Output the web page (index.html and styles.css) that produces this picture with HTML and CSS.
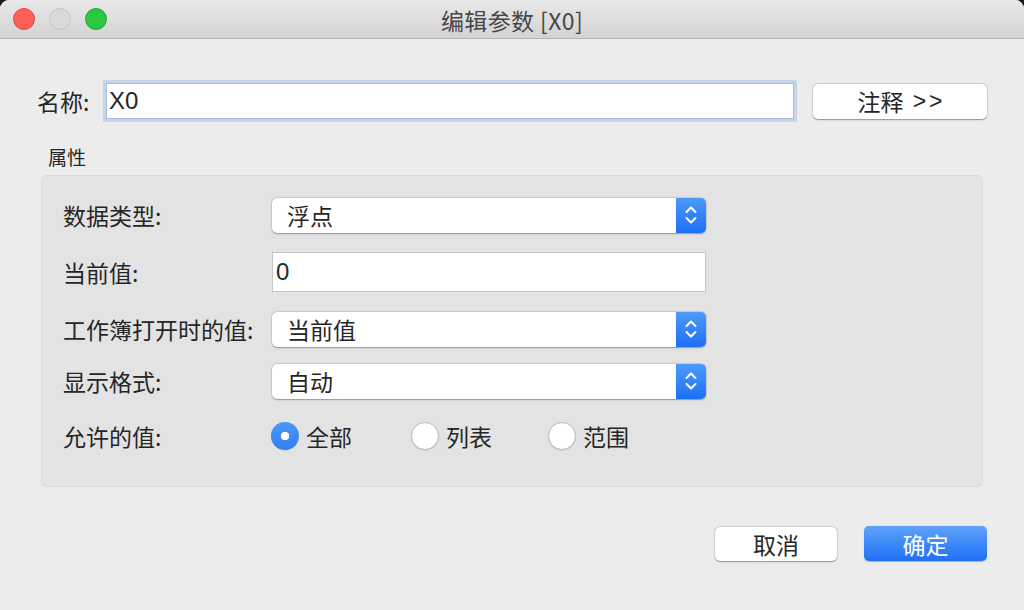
FILE: index.html
```html
<!DOCTYPE html>
<html lang="zh">
<head>
<meta charset="utf-8">
<title>编辑参数 [X0]</title>
<link rel="stylesheet" href="styles.css">
</head>
<body>
<div class="window">
  <div class="titlebar">
    <div class="lights">
      <span class="light red"></span>
      <span class="light grey"></span>
      <span class="light green"></span>
    </div>
    <div class="title">编辑参数 [X0]</div>
  </div>
  <div class="content">
    <div class="name-row">
      <span class="name-label">名称:</span>
      <div class="name-input">X0</div>
      <div class="btn note-btn">注释 <span class="arrows">&gt;&gt;</span></div>
    </div>
    <div class="section-title">属性</div>
    <div class="group">
      <div class="row row-1">
        <span class="label">数据类型:</span>
        <div class="popup"><span class="popup-text">浮点</span><span class="stepper"><svg width="14" height="22" viewBox="0 0 14 22"><path d="M2.5 8 L7 3.5 L11.5 8 M2.5 14 L7 18.5 L11.5 14" fill="none" stroke="#fff" stroke-width="2" stroke-linecap="round" stroke-linejoin="round"/></svg></span></div>
      </div>
      <div class="row row-2">
        <span class="label">当前值:</span>
        <div class="textfield">0</div>
      </div>
      <div class="row row-3">
        <span class="label">工作簿打开时的值:</span>
        <div class="popup"><span class="popup-text">当前值</span><span class="stepper"><svg width="14" height="22" viewBox="0 0 14 22"><path d="M2.5 8 L7 3.5 L11.5 8 M2.5 14 L7 18.5 L11.5 14" fill="none" stroke="#fff" stroke-width="2" stroke-linecap="round" stroke-linejoin="round"/></svg></span></div>
      </div>
      <div class="row row-4">
        <span class="label">显示格式:</span>
        <div class="popup"><span class="popup-text">自动</span><span class="stepper"><svg width="14" height="22" viewBox="0 0 14 22"><path d="M2.5 8 L7 3.5 L11.5 8 M2.5 14 L7 18.5 L11.5 14" fill="none" stroke="#fff" stroke-width="2" stroke-linecap="round" stroke-linejoin="round"/></svg></span></div>
      </div>
      <div class="row row-5">
        <span class="label">允许的值:</span>
        <div class="radios">
          <span class="radio-item r-all"><span class="radio on"></span>全部</span>
          <span class="radio-item r-list"><span class="radio"></span>列表</span>
          <span class="radio-item r-range"><span class="radio"></span>范围</span>
        </div>
      </div>
    </div>
    <div class="footer">
      <div class="btn cancel-btn">取消</div>
      <div class="btn ok-btn">确定</div>
    </div>
  </div>
</div>
</body>
</html>
```
FILE: styles.css
```css
html, body {
  margin: 0;
  padding: 0;
  background: #1a1a1a;
}
body {
  width: 1024px;
  height: 610px;
  overflow: hidden;
  font-family: "Liberation Sans", "Noto Sans CJK SC", sans-serif;
  color: #262626;
}
.window {
  width: 1024px;
  height: 610px;
  background: #ececec;
  border-radius: 9px 9px 0 0;
  overflow: hidden;
  display: flex;
  flex-direction: column;
}
.titlebar {
  height: 38px;
  flex: none;
  background: linear-gradient(#e9e9e9, #d3d3d3);
  border-bottom: 1px solid #b4b4b4;
  position: relative;
  display: flex;
  align-items: center;
  justify-content: center;
}
.lights {
  position: absolute;
  left: 13px;
  top: 8px;
  display: flex;
  gap: 14px;
}
.light {
  width: 22px;
  height: 22px;
  border-radius: 50%;
  box-sizing: border-box;
}
.red { background: #fe5f57; border: 1px solid #e2463f; }
.grey { background: #d9d9d9; border: 1px solid #c4c4c4; }
.green { background: #29c840; border: 1px solid #1faa30; }
.title {
  font-size: 23px;
  color: #474747;
  font-family: "Noto Sans CJK SC", sans-serif;
  margin-top: 1px;
  letter-spacing: 0.4px;
}
.content {
  flex: 1;
  display: flex;
  flex-direction: column;
  padding: 0 37px 0 41px;
}
.name-row {
  display: flex;
  align-items: center;
  margin-top: 43px;
  height: 38px;
  margin-left: -4px;
}
.name-label {
  font-size: 23px;
  width: 66px;
  font-family: "Noto Sans CJK SC", sans-serif;
}
.name-input {
  width: 688px;
  height: 36px;
  margin: 0 3px;
  box-sizing: border-box;
  background: #fff;
  border: 1px solid #a9bcd9;
  box-shadow: 0 0 0 3px #c6d5ea;
  font-size: 24px;
  line-height: 34px;
  padding-left: 2px;
}
.btn {
  box-sizing: border-box;
  background: #fff;
  border-radius: 5px;
  box-shadow: 0 0.5px 1.5px rgba(0,0,0,0.35), 0 0 0 0.5px rgba(0,0,0,0.12);
  display: flex;
  align-items: center;
  justify-content: center;
  font-size: 23px;
  font-family: "Noto Sans CJK SC", sans-serif;
  color: #262626;
}
.note-btn {
  width: 174px;
  height: 35px;
  margin-left: 16px;
  white-space: pre;
}
.arrows {
  font-family: "Liberation Sans", sans-serif;
  letter-spacing: 3px;
  margin-right: -3px;
  margin-left: 4px;
}
.section-title {
  font-size: 19px;
  font-family: "Noto Sans CJK SC", sans-serif;
  margin: 24px 0 0 7px;
  line-height: 26px;
}
.group {
  margin-top: 5px;
  width: 942px;
  height: 312px;
  box-sizing: border-box;
  background: #e3e3e3;
  border: 1px solid #dadada;
  border-radius: 6px;
  padding: 21px 0 0 21px;
  display: flex;
  flex-direction: column;
}
.row {
  display: flex;
  align-items: center;
}
.label {
  width: 209px;
  font-size: 23px;
  font-family: "Noto Sans CJK SC", sans-serif;
}
.row-1 { height: 36px; }
.row-2 { height: 40px; margin-top: 19px; }
.row-3 { height: 36px; margin-top: 19px; }
.row-4 { height: 36px; margin-top: 16px; }
.row-5 { height: 28px; margin-top: 23px; }
.popup {
  width: 434px;
  height: 35px;
  display: flex;
  border-radius: 5px;
  background: #fff;
  box-shadow: 0 0.5px 1.5px rgba(0,0,0,0.3), 0 0 0 0.5px rgba(0,0,0,0.12);
  overflow: hidden;
}
.popup-text {
  flex: 1;
  font-size: 23px;
  font-family: "Noto Sans CJK SC", sans-serif;
  padding-left: 15px;
  line-height: 35px;
}
.stepper {
  width: 30px;
  background: linear-gradient(#4c9af9, #1d6ff5);
  display: flex;
  align-items: center;
  justify-content: center;
}
.textfield {
  width: 434px;
  height: 40px;
  box-sizing: border-box;
  background: #fff;
  border: 1px solid #c6c6c6;
  font-size: 24px;
  line-height: 38px;
  padding-left: 3px;
}
.radios {
  display: flex;
  align-items: center;
}
.radio-item {
  display: flex;
  align-items: center;
  font-size: 23px;
  font-family: "Noto Sans CJK SC", sans-serif;
  gap: 7px;
}
.r-all { width: 140px; }
.r-list { width: 137px; }
.radio {
  width: 28px;
  height: 28px;
  box-sizing: border-box;
  border-radius: 50%;
  background: #fff;
  border: 1px solid #bcbcbc;
  box-shadow: 0 0.5px 1px rgba(0,0,0,0.15);
  margin-left: -1px;
}
.radio.on {
  background: radial-gradient(circle, #fff 0 4px, transparent 4.5px), linear-gradient(#4d97f7, #2f7ef4);
  border: none;
}
.footer {
  display: flex;
  justify-content: flex-end;
  align-items: center;
  margin-top: 39px;
  padding-right: 0;
  gap: 27px;
}
.cancel-btn {
  width: 122px;
  height: 34px;
}
.ok-btn {
  width: 123px;
  height: 35px;
  color: #fff;
  background: linear-gradient(#5ea3fa, #1f6ff5);
  box-shadow: 0 0.5px 1px rgba(0,0,0,0.25);
}
```
